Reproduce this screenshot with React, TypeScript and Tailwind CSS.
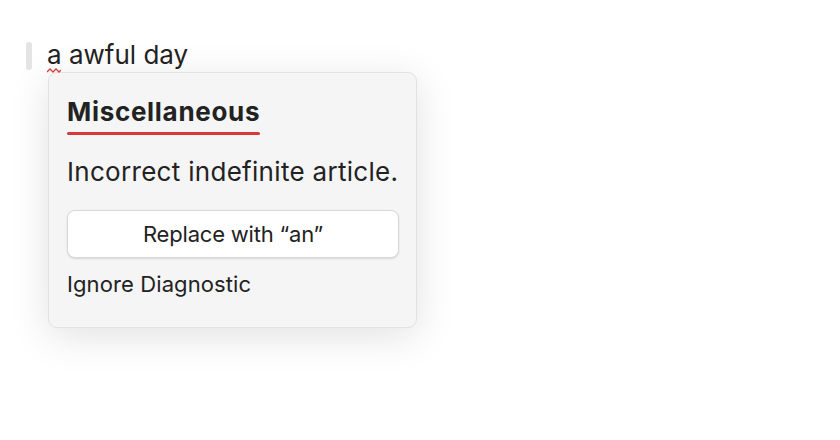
import React from "react";

export default function App() {
  return (
    <div className="w-[840px] h-[440px] bg-white overflow-hidden" style={{ fontFamily: "Inter, 'Noto Sans', sans-serif" }}>
      <div className="pl-[26px] pt-[42px]">
        <div className="flex items-start h-[30px]">
          <div className="w-[6px] h-[28px] rounded-full bg-[#e4e4e4]" />
          <div className="relative ml-[15px] text-[26px] leading-[30px] text-[#222] -mt-[2px] whitespace-nowrap">
            <span className="relative">
              a
              <svg className="absolute left-0 top-[29px]" width="14" height="5" viewBox="0 0 14 5">
                <path d="M0 4 L3 1 L6 4 L9 1 L12 4 L14 2" stroke="#d63c3c" strokeWidth="1.3" fill="none" />
              </svg>
            </span>{" "}
            awful day
          </div>
        </div>
        <div className="ml-[22px] w-[369px] h-[256px] rounded-[9px] bg-[#f5f5f5] border border-[#e2e2e2] shadow-[0_8px_40px_rgba(0,0,0,0.12)] px-[18px] pt-[24px]">
          <div className="inline-block">
            <div className="text-[26px] leading-[30px] font-bold text-[#222] tracking-[0.7px] whitespace-nowrap">Miscellaneous</div>
            <div className="mt-[5px] h-[3px] bg-[#d4393b] rounded-full" />
          </div>
          <div className="mt-[22px] text-[26px] leading-[30px] text-[#222] tracking-[0.3px] whitespace-nowrap">Incorrect indefinite article.</div>
          <div className="mt-[23px] h-[48px] w-[332px] rounded-[8px] bg-white border border-[#d8d8d8] shadow-[0_1px_2px_rgba(0,0,0,0.12)] flex items-center justify-center text-[22px] text-[#222] tracking-[-0.2px] whitespace-nowrap">
            Replace with “an”
          </div>
          <div className="mt-[13px] text-[22px] leading-[26px] text-[#222] tracking-[0.1px] whitespace-nowrap">Ignore Diagnostic</div>
        </div>
      </div>
    </div>
  );
}
